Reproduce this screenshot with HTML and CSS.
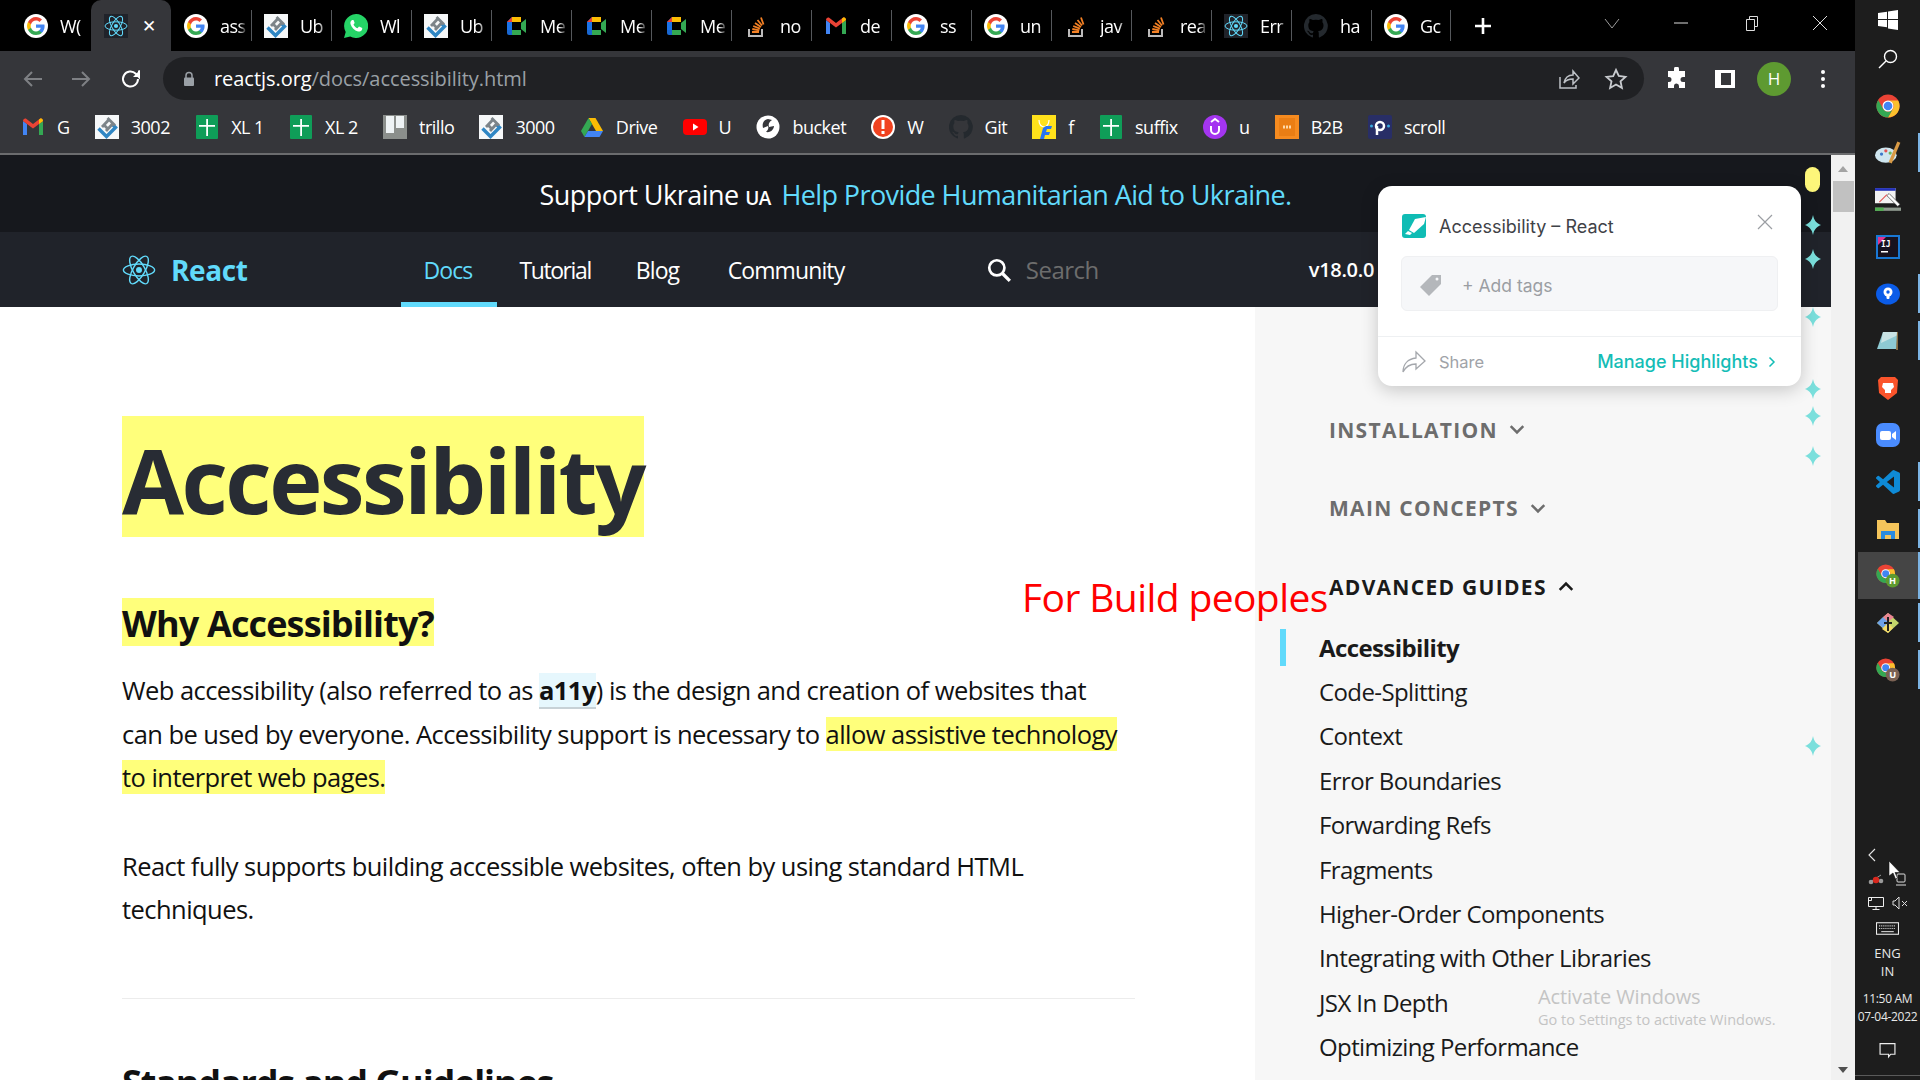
FILE: index.html
```html
<!DOCTYPE html>
<html lang="en">
<head>
<meta charset="utf-8">
<title>Accessibility – React</title>
<link rel="stylesheet" href="styles.css">
</head>
<body>
<svg class="defs" width="0" height="0" aria-hidden="true">
  <defs>
    <symbol id="g" viewBox="0 0 24 24">
      <circle cx="12" cy="12" r="12" fill="#fff"/>
      <path d="M20.6 12.2c0-.6-.1-1.200-.2-1.800H12v3.400h4.800c-.2 1.100-.8 2-1.800 2.700v2.200h2.900c1.700-1.600 2.700-3.900 2.700-6.500z" fill="#4285f4"/>
      <path d="M12 21c2.400 0 4.500-.8 5.900-2.200L15 16.500c-.8.5-1.800.9-3 .9-2.300 0-4.300-1.600-5-3.700H4v2.300C5.500 19 8.500 21 12 21z" fill="#34a853"/>
      <path d="M7 13.700c-.2-.5-.3-1.100-.3-1.700s.1-1.200.3-1.700V8H4c-.6 1.200-1 2.600-1 4s.4 2.800 1 4z" fill="#fbbc05"/>
      <path d="M12 6.600c1.300 0 2.500.5 3.400 1.300L18 5.400C16.500 4 14.400 3 12 3 8.500 3 5.500 5 4 8l3 2.300c.7-2.100 2.700-3.700 5-3.700z" fill="#ea4335"/>
    </symbol>
    <symbol id="atom" viewBox="-12 -12 24 24">
      <circle r="2.100" fill="#61dafb"/>
      <g fill="none" stroke="#61dafb" stroke-width="1">
        <ellipse rx="11" ry="4.200"/>
        <ellipse rx="11" ry="4.200" transform="rotate(60)"/>
        <ellipse rx="11" ry="4.200" transform="rotate(120)"/>
      </g>
    </symbol>
    <symbol id="ub" viewBox="0 0 24 24">
      <rect width="24" height="24" fill="#f6f8f9"/>
      <path d="M3.500 13.500l8 8 9-9-3-3" fill="none" stroke="#2f86c4" stroke-width="3.400"/>
      <path d="M7 12l8-8.500M11 16l6-6.500M12.500 3l7.500 7.500M8.500 9.500l5 5" fill="none" stroke="#7c8489" stroke-width="2.800"/>
    </symbol>
    <symbol id="meet" viewBox="0 0 24 24">
      <path d="M3 8l5-5h9v5H8v8H3z" fill="#1a73e8"/>
      <path d="M8 3h9v5H8z" fill="#fbbc04"/>
      <path d="M3 16h5v5H5a2 2 0 0 1-2-2z" fill="#1967d2"/>
      <path d="M8 16h9v5H8z" fill="#34a853"/>
      <path d="M17 9l5-4v14l-5-4z" fill="#34a853"/>
      <path d="M3 8l5-5v5z" fill="#ea4335"/>
    </symbol>
    <symbol id="so" viewBox="0 0 24 24">
      <path d="M5 15v7h13v-7" fill="none" stroke="#bcbbbb" stroke-width="2"/>
      <path d="M8 18h7M8.300 15l7 1.300M9.200 12l6.700 2.700M11 9l6 4M13.500 6l4.500 5.500M17 3.500l2.500 7" fill="none" stroke="#f48024" stroke-width="1.800"/>
    </symbol>
    <symbol id="gmail" viewBox="0 0 24 24">
      <path d="M2 20V6l4 3v11z" fill="#4285f4"/>
      <path d="M18 20V9l4-3v14z" fill="#34a853"/>
      <path d="M2 6c0-2 2-3 3.500-2L12 9l6.500-5C20 3 22 4 22 6l-4 3-6 4.500L6 9z" fill="#ea4335"/>
      <path d="M18 9l4-3c0-1.500-1-2.500-2.200-2.700L18 4.500z" fill="#fbbc04"/>
    </symbol>
    <symbol id="sheet" viewBox="0 0 24 24">
      <rect x="1" width="22" height="24" rx="1" fill="#0f9d58"/>
      <path d="M11.200 4h1.800v6h7v1.800h-7V21h-1.800v-9.200H4V10h7.200z" fill="#fff"/>
    </symbol>
    <symbol id="sparkle" viewBox="0 0 16 20">
      <path d="M8 0c1 5 3 8 8 10-5 2-7 5-8 10-1-5-3-8-8-10 5-2 7-5 8-10z" fill="#7adfdc"/>
    </symbol>
    <symbol id="chrome" viewBox="0 0 24 24">
      <circle cx="12" cy="12" r="11.500" fill="#ea4335"/>
      <path d="M12 6.500h10.200A11.500 11.500 0 0 1 12 23.500l4.800-8.500a5.500 5.500 0 0 0-4.800-8.500z" fill="#fbc02d"/>
      <path d="M2.200 5.900A11.500 11.500 0 0 0 12 23.500l4.800-8.500a5.500 5.500 0 0 1-9.600 0z" fill="#34a853"/>
      <circle cx="12" cy="12" r="5.500" fill="#fff"/>
      <circle cx="12" cy="12" r="4.300" fill="#4285f4"/>
    </symbol>
    <symbol id="ghub" viewBox="0 0 24 24">
      <path d="M12 0a12 12 0 0 0-3.800 23.400c.6.100.8-.3.800-.6v-2c-3.300.7-4-1.600-4-1.600-.6-1.400-1.400-1.800-1.400-1.800-1.100-.7.100-.7.100-.7 1.200.1 1.800 1.200 1.800 1.200 1.100 1.800 2.800 1.300 3.500 1 .1-.8.400-1.300.8-1.600-2.700-.3-5.500-1.300-5.500-6 0-1.300.5-2.400 1.200-3.200-.1-.3-.5-1.500.1-3.200 0 0 1-.3 3.300 1.200a11.500 11.500 0 0 1 6 0c2.300-1.500 3.300-1.200 3.300-1.200.7 1.700.2 2.900.1 3.200.8.800 1.200 1.900 1.200 3.200 0 4.600-2.800 5.700-5.500 6 .4.400.8 1.100.8 2.200v3.300c0 .3.200.7.800.6A12 12 0 0 0 12 0z" fill="#24292e"/>
    </symbol>
  </defs>
</svg>

<div class="desktop">
  <div class="browser">
    <div class="tabstrip">
      <div class="tab"><svg class="fav"><use href="#g"/></svg><span class="tab-t">W(</span></div>
      <div class="tab tab-active"><svg class="fav fav-dark"><use href="#atom"/></svg><span class="tab-x">✕</span></div>
      <div class="tab"><svg class="fav"><use href="#g"/></svg><span class="tab-t">ass</span></div>
      <div class="tab tab-sep"><svg class="fav"><use href="#ub"/></svg><span class="tab-t">Ub</span></div>
      <div class="tab tab-sep">
        <svg class="fav" viewBox="0 0 24 24"><path d="M12 0a12 12 0 0 0-10.300 18L0 24l6.200-1.600A12 12 0 1 0 12 0z" fill="#25d366"/><path d="M8 6c-1 .8-2 2-1.500 4 1 3.500 4 6.500 7.500 7.500 2 .4 3.500-.6 4-1.800l.3-1.600-3.300-1.600-1.500 1.700c-1.800-.7-3.200-2-4-3.800l1.200-1.400L9.500 6z" fill="#fff"/></svg>
        <span class="tab-t">Wl</span>
      </div>
      <div class="tab tab-sep"><svg class="fav"><use href="#ub"/></svg><span class="tab-t">Ub</span></div>
      <div class="tab tab-sep"><svg class="fav"><use href="#meet"/></svg><span class="tab-t">Me</span></div>
      <div class="tab tab-sep"><svg class="fav"><use href="#meet"/></svg><span class="tab-t">Me</span></div>
      <div class="tab tab-sep"><svg class="fav"><use href="#meet"/></svg><span class="tab-t">Me</span></div>
      <div class="tab tab-sep"><svg class="fav"><use href="#so"/></svg><span class="tab-t">no</span></div>
      <div class="tab tab-sep"><svg class="fav"><use href="#gmail"/></svg><span class="tab-t">de</span></div>
      <div class="tab tab-sep"><svg class="fav"><use href="#g"/></svg><span class="tab-t">ss</span></div>
      <div class="tab tab-sep"><svg class="fav"><use href="#g"/></svg><span class="tab-t">un</span></div>
      <div class="tab tab-sep"><svg class="fav"><use href="#so"/></svg><span class="tab-t">jav</span></div>
      <div class="tab tab-sep"><svg class="fav"><use href="#so"/></svg><span class="tab-t">rea</span></div>
      <div class="tab tab-sep"><svg class="fav fav-dark"><use href="#atom"/></svg><span class="tab-t">Err</span></div>
      <div class="tab tab-sep"><svg class="fav"><use href="#ghub"/></svg><span class="tab-t">ha</span></div>
      <div class="tab tab-sep tab-last"><svg class="fav"><use href="#g"/></svg><span class="tab-t">Gc</span></div>
      <svg class="newtab" viewBox="0 0 18 18"><path d="M9 1v16M1 9h16" stroke="#fff" stroke-width="2.600"/></svg>
      <div class="winctl">
        <svg class="win-i" viewBox="0 0 16 16"><path d="M1 4l7 9 7-9" fill="none" stroke="#9a9a9a"/></svg>
        <svg class="win-i" viewBox="0 0 16 16"><path d="M1 8h14" stroke="#ddd"/></svg>
        <svg class="win-i" viewBox="0 0 16 16"><path d="M3.500 4.500h8v11h-8zM6.500 4.500v-3h8v10h-3" fill="none" stroke="#ddd"/></svg>
        <svg class="win-i" viewBox="0 0 16 16"><path d="M1 1l14 14M15 1L1 15" stroke="#ddd"/></svg>
      </div>
    </div>

    <div class="toolbar">
      <svg class="tb-i" viewBox="0 0 24 24"><path d="M21 12H4M11 5l-7 7 7 7" fill="none" stroke="#7e8084" stroke-width="2"/></svg>
      <svg class="tb-i tb-forward" viewBox="0 0 24 24"><path d="M3 12h17M13 5l7 7-7 7" fill="none" stroke="#7e8084" stroke-width="2"/></svg>
      <svg class="tb-i tb-reload" viewBox="0 0 24 24"><path d="M19 12a7.500 7.500 0 1 1-2.200-5.300L20 10V3.500" fill="none" stroke="#fff" stroke-width="2"/><path d="M14 10h7V3z" fill="#fff"/></svg>
      <div class="omnibox">
        <svg class="lock" viewBox="0 0 12 16"><path d="M3 7V4.500a3 3 0 0 1 6 0V7" fill="none" stroke="#9aa0a6" stroke-width="1.500"/><rect x="1" y="6.500" width="10" height="8.500" rx="1" fill="#9aa0a6"/></svg>
        <span class="url"><span class="url-host">reactjs.org</span>/docs/accessibility.html</span>
        <span class="grow"></span>
        <svg class="omni-i" viewBox="0 0 24 24"><path d="M4 10v11h16v-3M8 16c1-5 4-8 9-8V4l6 7-6 6v-5c-4 0-7 1-9 4z" fill="none" stroke="#bdc1c6" stroke-width="1.500"/></svg>
        <svg class="omni-i" viewBox="0 0 24 24"><path d="M12 3l2.800 6 6.700.8-5 4.500 1.400 6.600L12 17.500 6.100 21l1.400-6.600-5-4.500 6.700-.8z" fill="none" stroke="#c8cbcf" stroke-width="1.800"/></svg>
      </div>
      <svg class="tb-i tb-ext" viewBox="0 0 24 24"><path d="M9 2a2.500 2.500 0 0 1 5 0v2h6v6h-2a2.500 2.500 0 0 0 0 5h2v6h-6v-2a2.500 2.500 0 0 0-5 0v2H3v-6h1a2.500 2.500 0 0 0 0-5H3V4h6z" fill="#fff"/></svg>
      <svg class="tb-i tb-side" viewBox="0 0 24 24"><path d="M2 3h20v18H2z" fill="#fff"/><path d="M8 6h10v12H8z" fill="#35363a"/></svg>
      <span class="avatar">H</span>
      <svg class="tb-i tb-more" viewBox="0 0 24 24"><circle cx="12" cy="5" r="2" fill="#fff"/><circle cx="12" cy="12" r="2" fill="#fff"/><circle cx="12" cy="19" r="2" fill="#fff"/></svg>
    </div>

    <div class="bookmarks">
      <div class="bm"><svg class="bm-i"><use href="#gmail"/></svg><span>G</span></div>
      <div class="bm"><svg class="bm-i"><use href="#ub"/></svg><span>3002</span></div>
      <div class="bm"><svg class="bm-i"><use href="#sheet"/></svg><span>XL 1</span></div>
      <div class="bm"><svg class="bm-i"><use href="#sheet"/></svg><span>XL 2</span></div>
      <div class="bm">
        <svg class="bm-i" viewBox="0 0 24 24"><rect width="24" height="24" fill="#8b8f8c"/><rect x="3" y="1" width="8" height="17" fill="#eef3f5"/><rect x="13" y="1" width="8" height="12" fill="#eef3f5"/></svg>
        <span>trillo</span>
      </div>
      <div class="bm"><svg class="bm-i"><use href="#ub"/></svg><span>3000</span></div>
      <div class="bm">
        <svg class="bm-i" viewBox="0 0 24 24"><path d="M8.500 3h7L23 16h-7z" fill="#fbbc04"/><path d="M8.500 3L1 16l3.500 6 7.500-13z" fill="#34a853"/><path d="M4.500 22h15L23 16H8z" fill="#4285f4"/></svg>
        <span>Drive</span>
      </div>
      <div class="bm">
        <svg class="bm-i" viewBox="0 0 24 24"><rect y="4" width="24" height="16" rx="4" fill="#f00"/><path d="M10 8.500l5.500 3.500-5.500 3.500z" fill="#fff"/></svg>
        <span>U</span>
      </div>
      <div class="bm">
        <svg class="bm-i" viewBox="0 0 24 24"><circle cx="12" cy="12" r="11.500" fill="#fff"/><path d="M12 4c-5 1-6 5-5 9l5-2c1 2 0 4-2 6 5 1 8-3 8-6l-5 1c-1-3 0-5 3-7z" fill="#35363a"/></svg>
        <span>bucket</span>
      </div>
      <div class="bm">
        <svg class="bm-i" viewBox="0 0 24 24"><circle cx="12" cy="12" r="12" fill="#fff"/><circle cx="12" cy="12" r="10" fill="#f1421f"/><path d="M12 5v9M12 16v3" stroke="#fff" stroke-width="3"/></svg>
        <span>W</span>
      </div>
      <div class="bm"><svg class="bm-i"><use href="#ghub"/></svg><span>Git</span></div>
      <div class="bm">
        <svg class="bm-i" viewBox="0 0 24 24"><rect width="24" height="24" fill="#ffe11b"/><path d="M7 5c0 5 3 7 6 7M17 5c0 4-2 6-4 7" fill="none" stroke="#fff" stroke-width="1.200"/><path d="M14 11h6l-1 3h-4l-1 3h4l-1 3h-4l-1 4h-4l3-11z" fill="#2874f0"/></svg>
        <span>f</span>
      </div>
      <div class="bm"><svg class="bm-i"><use href="#sheet"/></svg><span>suffix</span></div>
      <div class="bm">
        <svg class="bm-i" viewBox="0 0 24 24"><circle cx="12" cy="12" r="12" fill="#a435f0"/><path d="M8 11v4a4 4 0 0 0 8 0v-4M8 7l4-3 4 3" fill="none" stroke="#fff" stroke-width="2"/></svg>
        <span>u</span>
      </div>
      <div class="bm">
        <svg class="bm-i" viewBox="0 0 24 24"><rect width="24" height="24" fill="#f68b1f"/><rect x="4" y="3" width="16" height="18" fill="#ea7e14"/><path d="M8 12h8" stroke="#ffd9a8" stroke-width="3" stroke-dasharray="2 1"/></svg>
        <span>B2B</span>
      </div>
      <div class="bm">
        <svg class="bm-i" viewBox="0 0 24 24"><rect width="24" height="24" rx="2" fill="#282e66"/><circle cx="12" cy="11" r="4" fill="none" stroke="#fff" stroke-width="2.500"/><path d="M9 11v9" stroke="#fff" stroke-width="2.500"/><circle cx="3.500" cy="11" r="1.500" fill="#39a9e0"/><circle cx="20.500" cy="11" r="1.500" fill="#39a9e0"/></svg>
        <span>scroll</span>
      </div>
    </div>

    <div class="viewport">
      <div class="page">
        <div class="banner">
          <span class="banner-text">Support Ukraine <span class="ua">UA</span> <a class="banner-link">Help Provide Humanitarian Aid to Ukraine.</a></span>
        </div>
        <nav class="nav">
          <svg class="nav-logo" viewBox="-12 -12 24 24"><use href="#atom" x="-12" y="-12" width="24" height="24"/></svg>
          <span class="brand">React</span>
          <div class="nav-links">
            <a class="nav-link nav-active">Docs</a>
            <a class="nav-link nav-tutorial">Tutorial</a>
            <a class="nav-link nav-blog">Blog</a>
            <a class="nav-link">Community</a>
          </div>
          <svg class="search-i" viewBox="0 0 24 24"><circle cx="10" cy="10" r="7" fill="none" stroke="#fff" stroke-width="2.500"/><path d="M15 15l7 7" stroke="#fff" stroke-width="3"/></svg>
          <span class="search-t">Search</span>
          <span class="version">v18.0.0</span>
        </nav>
        <div class="columns">
          <main class="article">
            <h1 class="title"><mark class="hl">Accessibility</mark></h1>
            <h2 class="sub"><mark class="hl">Why Accessibility?</mark></h2>
            <p class="para">Web accessibility (also referred to as <abbr class="abbr">a11y</abbr>) is the design and creation of websites that can be used by everyone. Accessibility support is necessary to <mark class="hl">allow assistive technology to interpret web pages.</mark></p>
            <p class="para para-2">React fully supports building accessible websites, often by using standard HTML techniques.</p>
            <hr class="rule">
            <h2 class="sub sub-2">Standards and Guidelines</h2>
          </main>
          <aside class="sidebar">
            <h3 class="side-h">INSTALLATION <svg class="chev" viewBox="0 0 14 9"><path d="M1.500 1.500L7 7l5.500-5.500" fill="none" stroke="currentColor" stroke-width="2.200"/></svg></h3>
            <h3 class="side-h">MAIN CONCEPTS <svg class="chev" viewBox="0 0 14 9"><path d="M1.500 1.500L7 7l5.500-5.500" fill="none" stroke="currentColor" stroke-width="2.200"/></svg></h3>
            <h3 class="side-h side-open">ADVANCED GUIDES <svg class="chev" viewBox="0 0 14 9"><path d="M1.500 7.500L7 2l5.500 5.500" fill="none" stroke="currentColor" stroke-width="2.200"/></svg></h3>
            <ul class="side-list">
              <li class="side-item side-current">Accessibility</li>
              <li class="side-item">Code-Splitting</li>
              <li class="side-item">Context</li>
              <li class="side-item">Error Boundaries</li>
              <li class="side-item">Forwarding Refs</li>
              <li class="side-item">Fragments</li>
              <li class="side-item">Higher-Order Components</li>
              <li class="side-item">Integrating with Other Libraries</li>
              <li class="side-item">JSX In Depth</li>
              <li class="side-item">Optimizing Performance</li>
            </ul>
          </aside>
        </div>

        <span class="note">For Build peoples</span>
        <div class="activate">
          <div class="act-1">Activate Windows</div>
          <div class="act-2">Go to Settings to activate Windows.</div>
        </div>

        <span class="marker"></span>
        <svg class="spark s1"><use href="#sparkle"/></svg>
        <svg class="spark s2"><use href="#sparkle"/></svg>
        <svg class="spark s3"><use href="#sparkle"/></svg>
        <svg class="spark s4"><use href="#sparkle"/></svg>
        <svg class="spark s5"><use href="#sparkle"/></svg>
        <svg class="spark s6"><use href="#sparkle"/></svg>
        <svg class="spark s7"><use href="#sparkle"/></svg>

        <div class="popup">
          <div class="pop-head">
            <svg class="pop-logo" viewBox="0 0 24 24"><rect width="24" height="24" rx="3" fill="#0fbcb4"/><path d="M24 3l-11 2-6 11 5 3 10-9z" fill="#fff"/><path d="M6 17l-3 3 5 1 2-2z" fill="#fff"/></svg>
            <span class="pop-title">Accessibility – React</span>
            <svg class="pop-x" viewBox="0 0 16 16"><path d="M1 1l14 14M15 1L1 15" stroke="#9b9ea3" stroke-width="1.200"/></svg>
          </div>
          <div class="pop-tags">
            <svg class="tag-i" viewBox="0 0 24 24"><path d="M13 2h9v9L10 23 1 14z" fill="#b4b7bb"/><circle cx="18" cy="6" r="1.500" fill="#f6f7f9"/></svg>
            <span class="tag-t">+ Add tags</span>
          </div>
          <div class="pop-foot">
            <svg class="share-i" viewBox="0 0 24 24"><path d="M14 2l9 9-9 8v-5C8 14 4 16 1 22c0-8 5-13 13-14z" fill="none" stroke="#a4a7ac" stroke-width="1.300"/></svg>
            <span class="share-t">Share</span>
            <span class="grow"></span>
            <span class="manage">Manage Highlights</span>
            <svg class="manage-i" viewBox="0 0 8 12"><path d="M1.500 1.500L6 6l-4.500 4.500" fill="none" stroke="#14bdb6" stroke-width="1.500"/></svg>
          </div>
        </div>
      </div>
      <div class="scrollbar">
        <svg class="sb-arrow" viewBox="0 0 12 8"><path d="M6 1l5 6H1z" fill="#a3a3a3"/></svg>
        <div class="sb-thumb"></div>
        <span class="grow"></span>
        <svg class="sb-arrow" viewBox="0 0 12 8"><path d="M6 7L1 1h10z" fill="#505050"/></svg>
      </div>
    </div>
  </div>

  <aside class="taskbar">
    <div class="tk-slot tk-start"><svg class="tk-i" viewBox="0 0 24 24"><path d="M2 5l9-1.300V11H2zM12 3.500L22 2v9H12zM2 12h9v7.300L2 18zM12 12h10v10l-10-1.500z" fill="#fff"/></svg></div>
    <div class="tk-slot tk-search"><svg class="tk-i" viewBox="0 0 24 24"><circle cx="14.500" cy="9.500" r="6" fill="none" stroke="#fff" stroke-width="1.400"/><path d="M10 14l-7 7" stroke="#fff" stroke-width="1.400"/></svg></div>
    <div class="tk-slot"><svg class="tk-i"><use href="#chrome"/></svg></div>
    <div class="tk-slot tk-on"><svg class="tk-i tk-lg" viewBox="0 0 24 24"><ellipse cx="10" cy="14" rx="10" ry="7" fill="#cfe6ef"/><circle cx="6" cy="13" r="1.500" fill="#3b79c9"/><circle cx="10" cy="10" r="1.500" fill="#e05454"/><circle cx="14" cy="12" r="1.500" fill="#6cb65b"/><path d="M22 2l-8 19" stroke="#d99a45" stroke-width="3"/></svg></div>
    <div class="tk-slot"><svg class="tk-i tk-lg" viewBox="0 0 24 24"><rect y="1" width="19" height="14" fill="#f2f2f2"/><rect y="1" width="19" height="2.500" fill="#2230b8"/><path d="M13 6l10 10-2 2L11 8z" fill="#fff" stroke="#333" stroke-width=".6"/><path d="M4 14l7-7" stroke="#e05454"/><rect y="19" width="24" height="3" fill="#8f9a8f"/><rect y="19" width="8" height="3" fill="#4fae4f"/></svg></div>
    <div class="tk-slot"><svg class="tk-i" viewBox="0 0 24 24"><rect width="24" height="24" fill="#1978d4"/><rect x="2" y="2" width="20" height="20" fill="#17121f"/><path d="M2 2h8L2 10z" fill="#e0338f"/><text class="ij" x="5" y="12">IJ</text><rect x="5" y="16" width="7" height="1.500" fill="#fff"/></svg></div>
    <div class="tk-slot tk-on"><svg class="tk-i" viewBox="0 0 24 24"><ellipse cx="12" cy="12" rx="12" ry="10.500" fill="#0b5ce8"/><circle cx="12" cy="10" r="4.500" fill="#fff"/><rect x="10.500" y="11" width="3" height="6" rx="1" fill="#fff"/><circle cx="12" cy="10" r="1.700" fill="#0b5ce8"/></svg></div>
    <div class="tk-slot tk-on"><svg class="tk-i" viewBox="0 0 24 24"><path d="M7 3h15v17H1z" fill="#8ecad3"/><path d="M7 3h15v3l-17 8z" fill="#c9e3e4"/><path d="M22 3v18h-2l1-18z" fill="#8a6d42"/></svg></div>
    <div class="tk-slot"><svg class="tk-i" viewBox="0 0 24 24"><path d="M5 1h14l3 3-1 13-9 7-9-7L2 4z" fill="#fb542b"/><path d="M7 7h10l1 4-3 3v3h-6v-3L6 11z" fill="#fff"/></svg></div>
    <div class="tk-slot"><svg class="tk-i" viewBox="0 0 24 24"><rect width="24" height="24" rx="7" fill="#4a8cff"/><rect x="4" y="8" width="11" height="9" rx="2" fill="#fff"/><path d="M16 11l4-3v9l-4-3z" fill="#fff"/></svg></div>
    <div class="tk-slot tk-on"><svg class="tk-i" viewBox="0 0 24 24"><path d="M23.150 2.587L18.210.21a1.494 1.494 0 0 0-1.705.29l-9.460 8.630-4.120-3.128a.999.999 0 0 0-1.276.057L.327 7.261A1 1 0 0 0 .326 8.740L3.899 12 .326 15.260a1 1 0 0 0 .001 1.479L1.650 17.940a.999.999 0 0 0 1.276.057l4.120-3.128 9.460 8.630a1.492 1.492 0 0 0 1.704.29l4.942-2.377A1.500 1.500 0 0 0 24 20.060V3.939a1.500 1.500 0 0 0-.850-1.352zm-5.146 14.861L10.826 12l7.178-5.448v10.896z" fill="#0e8ad6"/></svg></div>
    <div class="tk-slot tk-on"><svg class="tk-i" viewBox="0 0 24 24"><path d="M1 3h8l2 3h12v16H1z" fill="#f5c55b"/><path d="M5 22v-8h14v8h-4v-4H9v4z" fill="#2b8ce0"/></svg></div>
    <div class="tk-slot tk-on tk-running"><svg class="tk-i" viewBox="0 0 26 26"><use href="#chrome" width="21" height="21"/><circle cx="18" cy="18" r="7.500" fill="#5d9a2f"/><text class="badge-t" x="18" y="21.500">H</text></svg></div>
    <div class="tk-slot tk-on"><svg class="tk-i" viewBox="0 0 24 24"><path d="M12 2l11 10-11 10L1 12z" fill="#c4d66b"/><path d="M7 6L1 12l6 5 6-6z" fill="#6ea2e8"/><path d="M12 2l-5 4 5 5 6-5z" fill="#e98592"/><path d="M6 18l6 4 5-5-5-5z" fill="#f5dc6a"/><path d="M12 6v14M8 12h8" stroke="#222" stroke-width="2"/></svg></div>
    <div class="tk-slot tk-on"><svg class="tk-i" viewBox="0 0 26 26"><use href="#chrome" width="21" height="21"/><circle cx="18" cy="18" r="7.500" fill="#7a6153"/><text class="badge-t" x="18" y="21.500">U</text></svg></div>
    <span class="grow"></span>
    <div class="tray">
      <svg class="tray-chev" viewBox="0 0 10 14"><path d="M8 1L2 7l6 6" fill="none" stroke="#e6e6e6" stroke-width="1.100"/></svg>
      <div class="tray-row">
        <svg class="tray-i" viewBox="0 0 16 16"><path d="M2 11l11-7" stroke="#999"/><circle cx="3" cy="11" r="2.300" fill="#999"/><circle cx="13" cy="10" r="2.300" fill="#999"/><circle cx="8" cy="9" r="3.200" fill="#d9281e"/></svg>
        <svg class="tray-i" viewBox="0 0 16 16"><rect x="5" y="3" width="8" height="8" rx="1" fill="none" stroke="#ddd"/><path d="M4 14h10" stroke="#ddd"/></svg>
      </div>
      <div class="tray-row">
        <svg class="tray-i" viewBox="0 0 16 16"><path d="M.5 2.500h15v9H.5zM8 11.500v3M4.500 14.500h7M.5 5.500h3v-3" fill="none" stroke="#eee"/></svg>
        <svg class="tray-i" viewBox="0 0 16 16"><path d="M1 6h2l4-4v12l-4-4H1zM10 6l5 5M15 6l-5 5" fill="none" stroke="#ddd"/></svg>
      </div>
      <svg class="tray-kbd" viewBox="0 0 22 12"><rect x=".5" y=".5" width="21" height="11" fill="none" stroke="#eee"/><path d="M3 3.500h16M3 6h16" stroke="#ddd" stroke-dasharray="1 1"/><path d="M5 9h12" stroke="#ddd"/></svg>
      <div class="tray-lang">ENG<br>IN</div>
      <div class="tray-clock">11:50 AM<br>07-04-2022</div>
      <svg class="tray-note" viewBox="0 0 16 16"><path d="M1 1.500h14v10h-4l-2 2.500v-2.500H1z" fill="none" stroke="#eee" stroke-width="1.100"/></svg>
    </div>
    <svg class="cursor" viewBox="0 0 12 20"><path d="M1 1v15l4-3 2.500 6 2-1-2.500-5.500h5z" fill="#fff" stroke="#111" stroke-width=".6"/></svg>
  </aside>
</div>
</body>
</html>
```

FILE: styles.css
```css
* { box-sizing: border-box; }
html, body { margin: 0; padding: 0; height: 100%; overflow: hidden; background: #1d1d1d; }
body { font-family: "Open Sans", "Noto Sans", sans-serif; }
.defs { position: absolute; }
.grow { flex: 1; }
.desktop { display: flex; width: 1920px; height: 1080px; }
.browser { width: 1855px; display: flex; flex-direction: column; }

.tabstrip { height: 51px; background: #000; display: flex; align-items: center; padding-left: 11px; position: relative; }
.tab { width: 80px; height: 31px; display: flex; align-items: center; gap: 12px; padding-left: 12px; color: #fff; font-size: 18px; overflow: hidden; white-space: nowrap; border-left: 1px solid transparent; flex: none; }
.tab-sep { border-left-color: #55585c; }
.tab-last { border-right: 1px solid #55585c; }
.tab-t { width: 27px; overflow: hidden; letter-spacing: -.5px; mask-image: linear-gradient(90deg, #000 70%, transparent); }
.tab-x { font-size: 17px; }
.tab-active { background: #35363a; height: 51px; border-radius: 10px 10px 0 0; gap: 14px; }
.fav { width: 24px; height: 24px; flex: none; }
.fav-dark { background: #20232a; }
.newtab { width: 18px; height: 18px; margin-left: 23px; flex: none; }
.winctl { position: absolute; right: 0; top: 0; height: 45px; display: flex; align-items: center; }
.win-i { width: 16px; height: 16px; margin-right: 53.500px; }
.win-i:last-child { margin-right: 27px; }

.toolbar { height: 49px; background: #35363a; display: flex; align-items: center; padding: 6px 0 0 21px; }
.tb-i { width: 24px; height: 24px; flex: none; margin-right: 24px; }
.tb-forward { margin-right: 26px; }
.tb-reload { margin-right: 20px; }
.omnibox { width: 1481px; height: 43px; border-radius: 22px; background: #202124; display: flex; align-items: center; padding: 0 16px 0 20px; margin-right: 21px; flex: none; }
.lock { width: 12px; height: 16px; margin-right: 19px; }
.url { font-size: 20px; color: #9aa0a6; letter-spacing: -.05px; }
.url-host { color: #fff; }
.omni-i { width: 24px; height: 24px; margin-right: 24px; flex: none; }
.omni-i:last-child { margin-right: 0; }
.tb-side { margin-right: 20px; }
.avatar { width: 34px; height: 34px; border-radius: 50%; background: #5e9a31; color: #fff; display: flex; align-items: center; justify-content: center; font-size: 17px; margin-right: 20px; flex: none; }
.tb-more { margin-right: 0; }

.bookmarks { height: 55px; background: #35363a; border-bottom: 2px solid #6b6c6e; display: flex; align-items: center; padding-left: 21px; color: #fff; font-size: 18px; }
.bm { display: flex; align-items: center; gap: 12px; margin-right: 25.200px; white-space: nowrap; letter-spacing: -.5px; }
.bm-i { width: 24px; height: 24px; flex: none; }

.viewport { flex: 1; display: flex; min-height: 0; }
.page { width: 1831px; position: relative; overflow: hidden; background: #fff; display: flex; flex-direction: column; flex: none; }
.banner { height: 77px; background: #16181d; display: flex; align-items: center; justify-content: center; color: #fff; font-size: 27px; letter-spacing: -.5px; flex: none; }
.banner-text { margin-top: 1px; }
.ua { font-size: 19px; font-weight: 600; }
.banner-link { color: #61dafb; margin-left: 4px; letter-spacing: -.6px; }
.nav { height: 75px; background: #20232a; display: flex; align-items: center; color: #fff; font-size: 23px; padding-left: 122px; flex: none; }
.nav-logo { width: 34px; height: 34px; flex: none; }
.brand { color: #61dafb; font-weight: 700; font-size: 28px; margin-left: 15px; width: 230px; letter-spacing: -.4px; }
.nav-links { display: flex; height: 100%; align-items: stretch; letter-spacing: -.9px; }
.nav-link { padding: 0 22.500px; display: flex; align-items: center; }
.nav-active { color: #61dafb; border-bottom: 5px solid #61dafb; padding: 5px 24.500px 0 22.500px; }
.nav-tutorial { letter-spacing: -1.400px; }
.nav-blog { padding-right: 26px; }
.search-i { width: 26px; height: 26px; margin-left: 119px; flex: none; }
.search-t { color: #6d6d6d; margin-left: 14px; width: 283px; font-size: 24px; letter-spacing: -.5px; }
.version { font-size: 20px; font-weight: 600; letter-spacing: -.3px; }

.columns { flex: 1; display: flex; min-height: 0; }
.article { width: 1255px; padding: 109px 0 0 122px; color: #111; flex: none; }
.title { margin: 0; height: 121px; font-size: 90px; line-height: 121px; font-weight: 700; letter-spacing: -2.500px; color: #282c34; }
.hl { background: #ffff7b; color: inherit; }
.title .hl { display: inline-block; height: 121px; padding-top: 5px; overflow: visible; line-height: 116px; }
.sub { margin: 61px 0 0; font-size: 36px; line-height: 48px; font-weight: 700; color: #111; letter-spacing: -.85px; }
.sub .hl { display: inline-block; height: 48px; padding-top: 3px; line-height: 45px; }
.para { margin: 21px 0 0; width: 1002px; font-size: 25.500px; line-height: 43.500px; letter-spacing: -.55px; color: #111; }
.para-2 { margin-top: 45px; }
.abbr { font-weight: 700; background: #e6f7fd; border-bottom: 2px solid #c7d1d6; text-decoration: none; }
.rule { margin: 66px 0 0; width: 1013px; border: 0; border-top: 1px solid #ececec; }
.sub-2 { margin-top: 60px; letter-spacing: -1.150px; }

.sidebar { flex: 1; background: #f7f7f7; padding: 107.500px 0 0 74px; }
.side-h { margin: 0 0 48.500px; font-size: 21px; line-height: 30px; font-weight: 700; letter-spacing: 1.300px; color: #6d6d6d; display: flex; align-items: center; gap: 11px; height: 30px; }
.side-open { color: #1a1a1a; margin-bottom: 24px; }
.chev { width: 16px; height: 11px; flex: none; }
.side-list { list-style: none; margin: 0 0 0 -49px; padding: 0; }
.side-item { position: relative; font-size: 24px; line-height: 44.400px; padding-left: 39px; color: #1a1a1a; letter-spacing: -.6px; white-space: nowrap; }
.side-current { font-weight: 700; }
.side-current::before { content: ""; position: absolute; left: 0; top: 3px; width: 6px; height: 37px; background: #61dafb; }

.note { position: absolute; left: 1022px; top: 417px; color: #f00; font-size: 39px; line-height: 50px; letter-spacing: -.6px; }
.activate { position: absolute; left: 1538px; top: 829px; color: #c4c4c4; }
.act-1 { font-size: 20px; line-height: 26px; letter-spacing: -.1px; }
.act-2 { font-size: 14.500px; line-height: 20px; }
.marker { position: absolute; left: 1805px; top: 12px; width: 15px; height: 25px; border-radius: 8px; background: #fdf67a; }
.spark { position: absolute; left: 1805px; width: 16px; height: 20px; }
.s1 { top: 60px; }
.s2 { top: 94px; }
.s3 { top: 152px; }
.s4 { top: 224px; }
.s5 { top: 251px; }
.s6 { top: 291px; }
.s7 { top: 581px; }

.popup { position: absolute; left: 1378px; top: 31px; width: 423px; height: 200px; background: #fff; border-radius: 14px; box-shadow: 0 4px 18px rgba(0,0,0,.2); font-family: Inter, "Noto Sans", sans-serif; display: flex; flex-direction: column; }
.pop-head { display: flex; align-items: center; padding: 10px 24px 0; height: 70px; flex: none; }
.pop-logo { width: 24px; height: 24px; flex: none; }
.pop-title { font-size: 18px; color: #3f4247; margin-left: 13px; flex: 1; }
.pop-x { width: 16px; height: 16px; margin-right: 4px; margin-top: -8px; }
.pop-tags { margin: 0 23px 0 23px; height: 55px; background: #f6f7f9; border: 1px solid #eff0f2; border-radius: 6px; display: flex; align-items: center; padding: 3px 0 0 17px; flex: none; }
.tag-i { width: 24px; height: 24px; }
.tag-t { margin-left: 19px; font-size: 17.500px; color: #9b9ea3; }
.pop-foot { margin-top: 25px; border-top: 1px solid #eef0f2; flex: 1; display: flex; align-items: center; padding: 0 25px 0 24px; }
.share-i { width: 24px; height: 24px; flex: none; }
.share-t { margin-left: 13px; font-size: 16.500px; color: #a0a3a8; }
.manage { color: #14bdb6; font-size: 18px; font-weight: 500; }
.manage-i { width: 8px; height: 12px; margin-left: 10px; }

.scrollbar { width: 24px; background: #f1f1f1; display: flex; flex-direction: column; align-items: center; padding: 10px 0 6px; }
.sb-arrow { width: 12px; height: 8px; flex: none; }
.sb-thumb { width: 21px; height: 31px; background: #c1c1c1; margin-top: 8px; }

.taskbar { width: 65px; background: #1d1d1d; display: flex; flex-direction: column; align-items: center; position: relative; }
.tk-slot { position: relative; width: 100%; height: 47px; display: flex; align-items: center; justify-content: center; flex: none; }
.tk-start { height: 40px; }
.tk-search { height: 42px; padding-bottom: 4px; }
.tk-on::after { content: ""; position: absolute; right: 0; top: 4px; bottom: 4px; width: 2px; background: #7cb4e4; }
.tk-running { background: linear-gradient(90deg, transparent 3px, #454545 3px); }
.tk-running::after { top: 0; bottom: 0; }
.tk-i { width: 24px; height: 24px; flex: none; }
.tk-lg { width: 26px; height: 26px; }
.ij { font: 700 8px "DejaVu Sans Mono", monospace; fill: #fff; }
.badge-t { font: 700 10px "Open Sans", sans-serif; fill: #fff; text-anchor: middle; }
.tray { display: flex; flex-direction: column; align-items: center; width: 100%; color: #e8e8e8; font-size: 13px; line-height: 18px; text-align: center; padding-bottom: 16px; border-bottom: 1px solid #5a5a5a; margin-bottom: 4px; }
.tray-chev { width: 10px; height: 14px; margin: 0 31px 5px 0; flex: none; }
.tray-row { display: flex; gap: 8px; height: 24px; align-items: center; flex: none; }
.tray-i { width: 16px; height: 16px; }
.tray-kbd { width: 23px; height: 13px; margin: 7.500px 0 8.500px; flex: none; }
.tray-lang { margin-bottom: 10px; }
.tray-clock { font-size: 12px; white-space: nowrap; margin-bottom: 16.500px; letter-spacing: -.3px; }
.tray-note { width: 17px; height: 17px; flex: none; }
.cursor { position: absolute; left: 33px; top: 860px; width: 12px; height: 20px; }
```
